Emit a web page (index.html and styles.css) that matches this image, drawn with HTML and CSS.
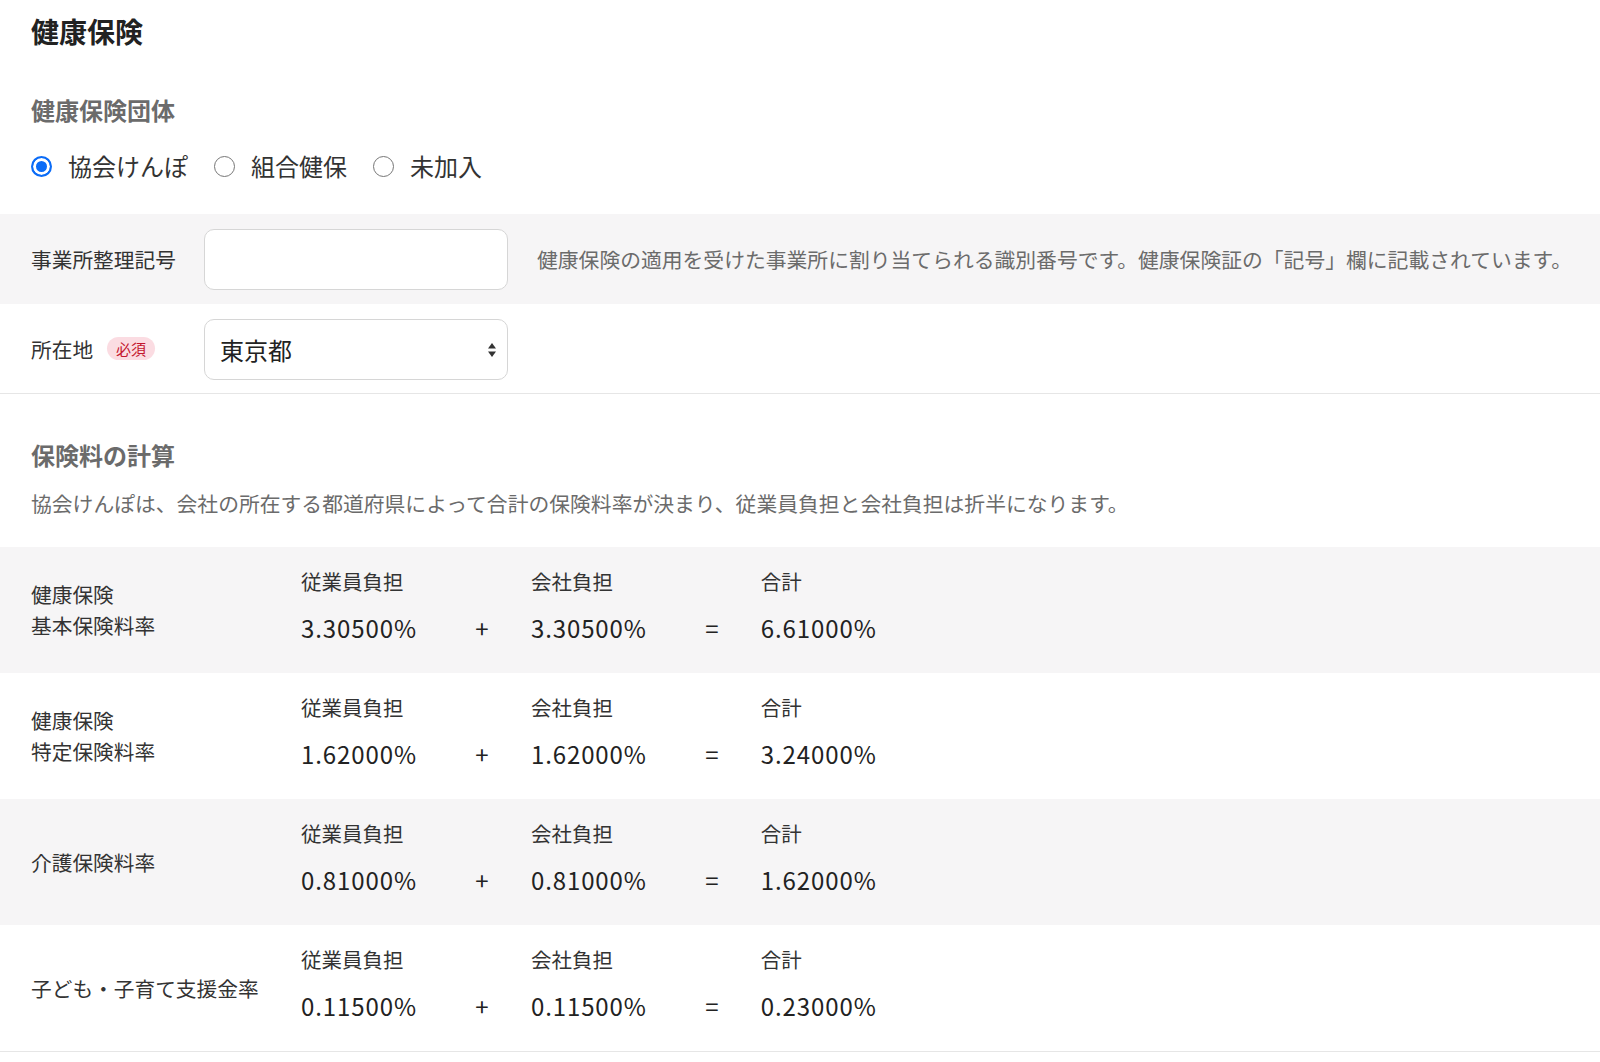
FILE: index.html
```html
<!DOCTYPE html>
<html lang="ja">
<head>
  <meta charset="UTF-8" />
  <meta name="viewport" content="width=device-width, initial-scale=1.0" />
  <title>健康保険</title>
  <link rel="stylesheet" href="styles.css">
</head>
<body>
  <main class="page">
    <section class="intro">
      <h1 class="page-title">健康保険</h1>
      <h2 class="section-title">健康保険団体</h2>
      <div class="radio-group">
        <label class="radio"><input type="radio" name="union" checked><span>協会けんぽ</span></label>
        <label class="radio"><input type="radio" name="union"><span>組合健保</span></label>
        <label class="radio"><input type="radio" name="union"><span>未加入</span></label>
      </div>
    </section>

    <div class="form-rows">
      <div class="form-row shaded">
        <div class="form-label">事業所整理記号</div>
        <input class="text-input" type="text">
        <p class="form-help">健康保険の適用を受けた事業所に割り当てられる識別番号です。健康保険証の「記号」欄に記載されています。</p>
      </div>
      <div class="form-row">
        <div class="form-label">所在地<span class="badge">必須</span></div>
        <div class="select-wrap">
          <select class="select">
            <option>東京都</option>
          </select>
          <svg class="select-arrow" width="10" height="18" viewBox="0 0 10 18">
            <path d="M5 2 L9 7.5 H1 Z" fill="#333"/>
            <path d="M5 16 L9 10.5 H1 Z" fill="#333"/>
          </svg>
        </div>
      </div>
    </div>

    <section class="calc-intro">
      <h2 class="section-title">保険料の計算</h2>
      <p class="section-desc">協会けんぽは、会社の所在する都道府県によって合計の保険料率が決まり、従業員負担と会社負担は折半になります。</p>
    </section>

    <div class="rate-table">
      <div class="rate-row shaded">
        <div class="rate-label">健康保険<br>基本保険料率</div>
        <div class="rate-calc">
          <div class="rate-col"><div class="rate-head">従業員負担</div><div class="rate-value">3.30500%</div></div>
          <div class="rate-op">+</div>
          <div class="rate-col"><div class="rate-head">会社負担</div><div class="rate-value">3.30500%</div></div>
          <div class="rate-op">=</div>
          <div class="rate-col"><div class="rate-head">合計</div><div class="rate-value">6.61000%</div></div>
        </div>
      </div>
      <div class="rate-row">
        <div class="rate-label">健康保険<br>特定保険料率</div>
        <div class="rate-calc">
          <div class="rate-col"><div class="rate-head">従業員負担</div><div class="rate-value">1.62000%</div></div>
          <div class="rate-op">+</div>
          <div class="rate-col"><div class="rate-head">会社負担</div><div class="rate-value">1.62000%</div></div>
          <div class="rate-op">=</div>
          <div class="rate-col"><div class="rate-head">合計</div><div class="rate-value">3.24000%</div></div>
        </div>
      </div>
      <div class="rate-row shaded">
        <div class="rate-label">介護保険料率</div>
        <div class="rate-calc">
          <div class="rate-col"><div class="rate-head">従業員負担</div><div class="rate-value">0.81000%</div></div>
          <div class="rate-op">+</div>
          <div class="rate-col"><div class="rate-head">会社負担</div><div class="rate-value">0.81000%</div></div>
          <div class="rate-op">=</div>
          <div class="rate-col"><div class="rate-head">合計</div><div class="rate-value">1.62000%</div></div>
        </div>
      </div>
      <div class="rate-row last">
        <div class="rate-label">子ども・子育て支援金率</div>
        <div class="rate-calc">
          <div class="rate-col"><div class="rate-head">従業員負担</div><div class="rate-value">0.11500%</div></div>
          <div class="rate-op">+</div>
          <div class="rate-col"><div class="rate-head">会社負担</div><div class="rate-value">0.11500%</div></div>
          <div class="rate-op">=</div>
          <div class="rate-col"><div class="rate-head">合計</div><div class="rate-value">0.23000%</div></div>
        </div>
      </div>
    </div>
  </main>
</body>
</html>
```

FILE: styles.css
```css
* { box-sizing: border-box; margin: 0; padding: 0; }
body {
  font-family: "Noto Sans CJK JP", "Noto Sans", sans-serif;
  background-color: #fff;
  color: #333;
}

.shaded { background-color: #f6f5f6; }

/* Top heading + radio group */
.intro {
  padding: 11px 31px 31px;
}
.page-title {
  font-size: 28px;
  line-height: 40px;
  font-weight: 700;
  color: #222;
}
.section-title {
  font-size: 24px;
  line-height: 34px;
  font-weight: 700;
  color: #6b6b6b;
}
.intro .section-title {
  margin-top: 42px;
}
.radio-group {
  display: flex;
  align-items: center;
  gap: 26px;
  margin-top: 22px;
}
.radio {
  display: flex;
  align-items: center;
  gap: 16px;
  font-size: 24px;
  line-height: 34px;
  color: #333;
  cursor: pointer;
}
.radio input {
  appearance: none;
  -webkit-appearance: none;
  width: 21px;
  height: 21px;
  border: 1px solid #767676;
  border-radius: 50%;
  background: #fff;
  margin: 0;
}
.radio input:checked {
  border: 2px solid #0b6cf7;
  background-color: #0b6cf7;
  box-shadow: inset 0 0 0 3px #fff;
}

/* Form rows */
.form-row {
  display: flex;
  align-items: center;
  height: 90px;
  padding: 0 31px;
}
.form-row:last-child {
  border-bottom: 1px solid #e6e6e6;
}
.form-label {
  display: flex;
  align-items: center;
  width: 173px;
  flex-shrink: 0;
  font-size: 20.7px;
  color: #333;
}
.badge {
  display: inline-block;
  margin-left: 14px;
  padding: 0 9px;
  height: 23px;
  line-height: 23px;
  border-radius: 12px;
  background-color: #fbdce2;
  color: #c4162f;
  font-size: 15px;
}
.text-input,
.select {
  flex-shrink: 0;
  width: 304px;
  height: 61px;
  border: 1px solid #d6d6d6;
  border-radius: 10px;
  background: #fff;
  font-family: inherit;
  font-size: 24px;
  color: #222;
  padding: 0 15px;
  outline: none;
}
.select {
  appearance: none;
  -webkit-appearance: none;
}
.select-wrap {
  position: relative;
  margin-top: 1px;
}
.select-arrow {
  position: absolute;
  right: 11px;
  top: 22px;
  pointer-events: none;
}
.form-help {
  margin-left: 29px;
  font-size: 20.8px;
  color: #6b6b6b;
  white-space: nowrap;
}

/* Calculation section */
.calc-intro {
  padding: 44px 31px 29px;
}
.section-desc {
  margin-top: 16px;
  font-size: 20.8px;
  line-height: 30px;
  color: #6b6b6b;
}

.rate-row {
  display: flex;
  align-items: center;
  padding: 0 31px;
}
.rate-row.last {
  border-bottom: 1px solid #e6e6e6;
}
.rate-label {
  width: 270px;
  flex-shrink: 0;
  font-size: 20.7px;
  line-height: 31px;
  color: #333;
}
.rate-calc {
  display: flex;
  padding: 19px 0 29px;
}
.rate-head {
  font-size: 20.5px;
  line-height: 30px;
  color: #333;
}
.rate-value {
  margin-top: 16px;
  font-size: 24px;
  line-height: 32px;
  letter-spacing: 0.9px;
  color: #222;
}
.rate-op {
  width: 30px;
  margin: 46px 34px 0 50px;
  text-align: center;
  font-size: 24px;
  line-height: 32px;
  color: #222;
}
```
